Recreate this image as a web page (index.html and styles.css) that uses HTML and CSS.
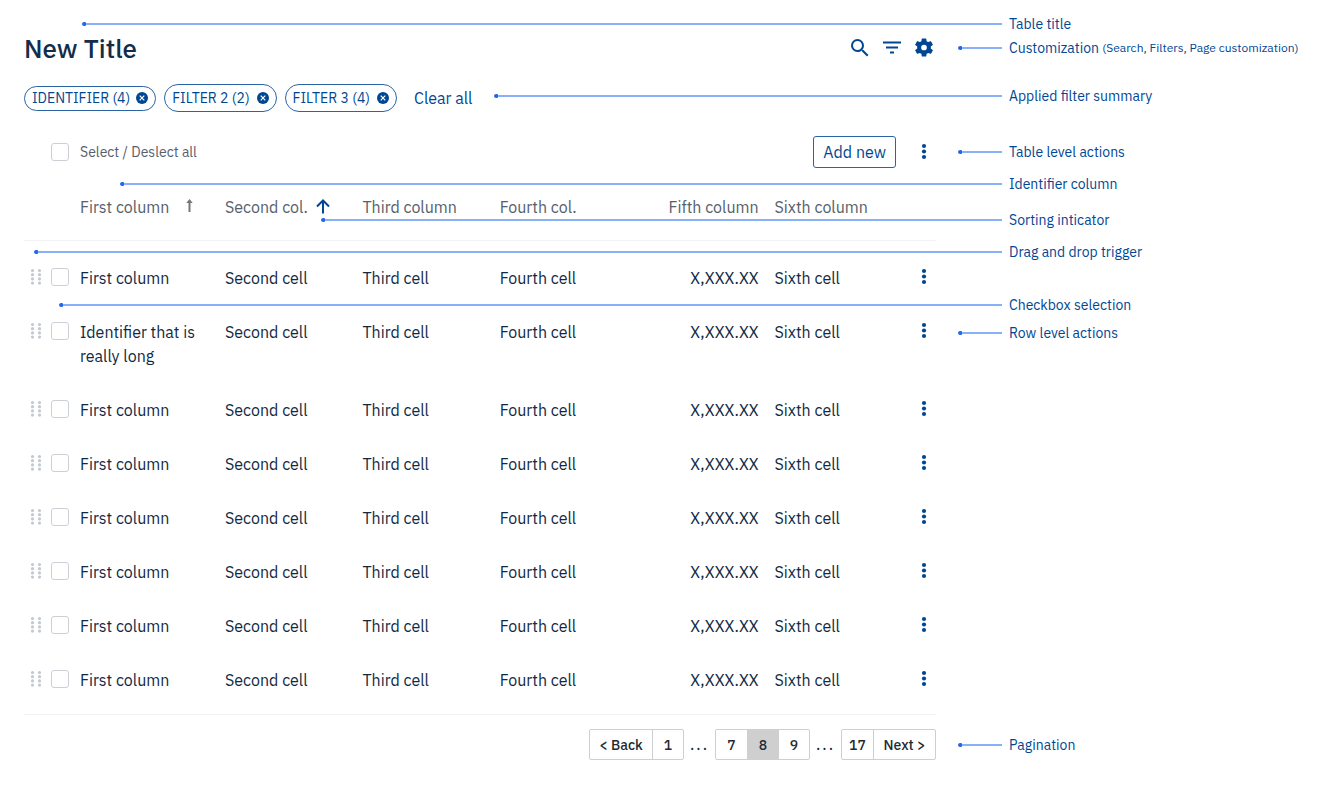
FILE: index.html
```html
<!DOCTYPE html>
<html lang="en">
<head>
<meta charset="utf-8">
<meta name="viewport" content="width=device-width, initial-scale=1">
<title>New Title</title>
<link rel="stylesheet" href="styles.css">
</head>
<body>
<svg class="sprite" aria-hidden="true">
  <symbol id="more" viewBox="0 0 24 24"><circle cx="12" cy="6" r="2.1"/><circle cx="12" cy="11.5" r="2.1"/><circle cx="12" cy="17" r="2.1"/></symbol>
  <symbol id="close" viewBox="0 0 12 12"><circle cx="6" cy="6" r="6"/><path d="M3.7 3.7l4.6 4.6M8.3 3.7L3.7 8.3" stroke="#fff" stroke-width="1.2"/></symbol>
  <symbol id="grip" viewBox="0 0 12 18"><circle cx="2.5" cy="2.5" r="1.6"/><circle cx="9.5" cy="2.5" r="1.6"/><circle cx="2.5" cy="6.7" r="1.6"/><circle cx="9.5" cy="6.7" r="1.6"/><circle cx="2.5" cy="10.9" r="1.6"/><circle cx="9.5" cy="10.9" r="1.6"/><circle cx="2.5" cy="15.1" r="1.6"/><circle cx="9.5" cy="15.1" r="1.6"/></symbol>
</svg>
<div class="page">
  <main class="panel">
    <header class="panel-header">
      <h1 class="title">New Title</h1>
      <div class="tools">
        <button class="icon-button" aria-label="Search"><svg class="icon" viewBox="0 0 24 24"><path d="M15.5 14h-.79l-.28-.27A6.47 6.47 0 0 0 16 9.5 6.5 6.5 0 1 0 9.5 16c1.61 0 3.09-.59 4.23-1.57l.27.28v.79l5 4.99L20.49 19l-4.99-5zm-6 0a4.5 4.5 0 1 1 0-9 4.5 4.5 0 0 1 0 9z"/></svg></button>
        <button class="icon-button" aria-label="Filters"><svg class="icon" viewBox="0 0 24 24"><path d="M10 17.5h4v-2h-4v2zM3 5.5v2h18v-2H3zm3 7h12v-2H6v2z"/></svg></button>
        <button class="icon-button" aria-label="Page customization"><svg class="icon" viewBox="0 0 24 24"><path transform="translate(0.6 0.1) scale(.95)" d="M19.14 12.94c.04-.3.06-.61.06-.94s-.02-.64-.07-.94l2.03-1.58a.49.49 0 0 0 .12-.61l-1.92-3.32a.49.49 0 0 0-.59-.22l-2.39.96a7.03 7.03 0 0 0-1.62-.94l-.36-2.54a.48.48 0 0 0-.48-.41h-3.84a.47.47 0 0 0-.47.41l-.36 2.54c-.59.24-1.13.57-1.62.94l-2.39-.96a.47.47 0 0 0-.59.22L2.74 8.87a.47.47 0 0 0 .12.61l2.03 1.58a6.2 6.2 0 0 0 0 1.88l-2.03 1.58a.49.49 0 0 0-.12.61l1.92 3.32c.12.22.37.29.59.22l2.39-.96c.5.38 1.03.7 1.62.94l.36 2.54c.05.24.24.41.48.41h3.84c.24 0 .44-.17.47-.41l.36-2.54c.59-.24 1.13-.56 1.62-.94l2.39.96c.22.08.47 0 .59-.22l1.92-3.32a.47.47 0 0 0-.12-.61l-2.01-1.58zM12 15a3 3 0 1 1 0-6 3 3 0 0 1 0 6z"/></svg></button>
      </div>
    </header>

    <div class="filters">
      <button class="pill pill-small">IDENTIFIER (4) <svg class="pill-icon"><use href="#close"/></svg></button>
      <button class="pill">FILTER 2 (2) <svg class="pill-icon"><use href="#close"/></svg></button>
      <button class="pill">FILTER 3 (4) <svg class="pill-icon"><use href="#close"/></svg></button>
      <button class="clear">Clear all</button>
    </div>

    <div class="toolbar">
      <label class="select-all"><input class="check" type="checkbox">Select / Deslect all</label>
      <button class="add">Add new</button>
      <button class="icon-button" aria-label="Table actions"><svg class="icon"><use href="#more"/></svg></button>
    </div>

    <table class="table">
      <colgroup><col class="col-drag"><col class="col-check"><col class="col-first"><col><col><col><col><col><col class="col-actions"></colgroup>
      <thead>
        <tr>
          <th></th><th></th>
          <th><button class="sort sort-wide">First column <svg class="arrow arrow-idle" viewBox="0 0 14 16"><path d="M7.5 13V2"/><path class="head" d="M4.3 4L7.5 0l3.2 4z"/></svg></button></th>
          <th><button class="sort">Second col. <svg class="arrow" viewBox="0 0 14 16"><path d="M7 14.5v-13M1 7.5l6-6 6 6"/></svg></button></th>
          <th>Third column</th><th>Fourth col.</th><th class="num">Fifth column</th><th>Sixth column</th><th></th>
        </tr>
      </thead>
      <tbody id="rows"></tbody>
    </table>

    <nav class="pagination" aria-label="Pagination">
      <div class="pages"><button class="page-button page-step">&lt; Back</button><button class="page-button">1</button></div>
      <span class="dots">...</span>
      <div class="pages"><button class="page-button">7</button><button class="page-button current" aria-current="page">8</button><button class="page-button">9</button></div>
      <span class="dots">...</span>
      <div class="pages"><button class="page-button">17</button><button class="page-button page-step">Next &gt;</button></div>
    </nav>
  </main>

  <aside>
    <ul class="notes">
      <li class="note from-title">Table title</li>
      <li class="note">Customization&nbsp;<small class="detail">(Search, Filters, Page customization)</small></li>
      <li class="note from-filters">Applied filter summary</li>
      <li class="note gap-toolbar">Table level actions</li>
      <li class="note from-identifier">Identifier column</li>
      <li class="note from-sort">Sorting inticator</li>
      <li class="note from-drag">Drag and drop trigger</li>
      <li class="note from-check">Checkbox selection</li>
      <li class="note gap-row">Row level actions</li>
      <li class="note gap-pages">Pagination</li>
    </ul>
  </aside>
</div>
<script src="rows.js"></script>
</body>
</html>
```
FILE: styles.css
```css
* { box-sizing: border-box; }

body {
  margin: 0;
  background: #fff;
  color: #0f2a43;
  font: 16px/24px "IBM Plex Sans", Roboto, sans-serif;
}

button {
  margin: 0;
  padding: 0;
  border: 0;
  background: none;
  color: #004793;
  font: inherit;
  cursor: pointer;
}

.sprite { display: none; }

.page {
  position: relative;
  display: grid;
  grid-template-columns: minmax(0, 1fr) 296px;
  column-gap: 73px;
  padding: 14px 15px 24px 24px;
}

.panel { padding-top: 18px; }

.panel-header {
  display: flex;
  align-items: center;
  justify-content: space-between;
  height: 32px;
}

.title {
  margin: 0;
  color: #132d4a;
  font-size: 26px;
  font-weight: 500;
  line-height: 32px;
}

.tools { display: flex; gap: 8px; }

.icon-button { display: block; width: 24px; height: 24px; }

.icon {
  display: block;
  width: 24px;
  height: 24px;
  fill: #004793;
}

.filters {
  display: flex;
  align-items: center;
  gap: 8px;
  margin-top: 20px;
}

.pill {
  display: flex;
  align-items: center;
  gap: 7px;
  height: 28px;
  padding: 0 7px;
  border: 1px solid #2a64a5;
  border-radius: 14px;
  font-size: 14px;
}

.pill-small { gap: 6px; height: 25px; }

.pill-icon { width: 12px; height: 12px; fill: #004793; }

.clear { margin-left: 9px; }

.toolbar {
  display: flex;
  align-items: center;
  gap: 16px;
  margin-top: 24px;
}

.select-all {
  display: flex;
  align-items: center;
  gap: 11px;
  margin-right: auto;
  padding-left: 27px;
  color: #56606c;
  font-size: 14px;
}

.check {
  display: block;
  width: 18px;
  height: 18px;
  margin: 0;
  border: 1px solid #cbd0d7;
  border-radius: 3px;
  background: #fff;
  appearance: none;
}

.check:checked { background: #004793; }

.add {
  height: 32px;
  padding: 0 9px;
  border: 1px solid #2a64a5;
  border-radius: 3px;
}

.table {
  width: 100%;
  margin-top: 6px;
  border-spacing: 0;
  table-layout: fixed;
}

.col-drag { width: 27px; }
.col-check { width: 29px; }
.col-first { width: 145px; }
.col-actions { width: 24px; }

th {
  height: 67px;
  padding: 0;
  border-bottom: 1px solid #f1f2f3;
  color: #56606c;
  font-weight: 400;
  text-align: left;
}

tbody::before { content: ""; display: block; height: 10px; }

td { padding: 15px 0; vertical-align: top; }

.table .num { padding-right: 16px; text-align: right; }

.name { padding-right: 16px; }

.tick { padding-top: 17px; }

.drag { padding: 17px 0 0 6px; }

.actions { padding-top: 14px; }

.grip { display: block; width: 12px; height: 18px; fill: #c3c9d1; }

.sort {
  display: flex;
  align-items: center;
  gap: 8px;
  color: inherit;
}

.sort-wide { gap: 13px; }

.arrow {
  width: 14px;
  height: 16px;
  fill: none;
  stroke: #004793;
  stroke-width: 2;
}

.arrow-idle { stroke: #777; }
.arrow-idle .head { fill: #777; stroke: none; }

.pagination {
  display: flex;
  justify-content: flex-end;
  margin-top: 7px;
  padding-top: 14px;
  border-top: 1px solid #f1f2f3;
}

.pages {
  display: flex;
  overflow: hidden;
  border: 1px solid #cfcfcf;
  border-radius: 2px;
}

.page-button {
  min-width: 31px;
  height: 29px;
  color: #222b33;
  font-size: 14px;
  font-weight: 500;
}

.page-button + .page-button { border-left: 1px solid #cfcfcf; }

.page-step { width: 62px; }

.current { background: #cfcfcf; }

.dots {
  width: 31px;
  font-weight: 400;
  letter-spacing: 2px;
  line-height: 31px;
  text-align: center;
}

.notes {
  margin: 0;
  padding: 0;
  color: #004793;
  font-size: 14px;
  line-height: 20px;
  list-style: none;
}

.note {
  --start: calc(100% - 362px);
  display: flex;
  align-items: center;
  margin-top: 4px;
  white-space: nowrap;
}

.detail { font-size: 12px; }

/* leader line with its dot, drawn over the table */
.note::before {
  content: "";
  position: absolute;
  z-index: 1;
  right: 318px;
  left: var(--start);
  height: 4px;
  background:
    radial-gradient(circle, #2469eb 70%, #8ab1f7 80%) 0 0 / 4px 4px no-repeat,
    linear-gradient(#8ab1f7, #8ab1f7) 2px 1px / 100% 2px no-repeat;
  border-radius: 2px 0 0 2px;
  pointer-events: none;
}

.from-title { --start: 82px; margin-top: 0; }
.from-filters { --start: 494px; margin-top: 28px; }
.gap-toolbar { margin-top: 36px; }
.from-identifier { --start: 120px; margin-top: 12px; }
.from-sort { --start: 321px; margin-top: 16px; }
.from-drag { --start: 34px; margin-top: 12px; }
.from-check { --start: 59px; margin-top: 33px; }
.gap-row { margin-top: 8px; }
.gap-pages { margin-top: 392px; }
```
FILE: rows.js
```js
const names = [
  "First column", "Identifier that is really long", "First column", "First column",
  "First column", "First column", "First column", "First column"
];

document.getElementById("rows").innerHTML = names.map((name, i) => `
  <tr>
    <td class="drag"><svg class="grip"><use href="#grip"/></svg></td>
    <td class="tick"><input class="check" type="checkbox" aria-label="Select row ${i + 1}"></td>
    <td class="name">${name}</td>
    <td>Second cell</td>
    <td>Third cell</td>
    <td>Fourth cell</td>
    <td class="num">X,XXX.XX</td>
    <td>Sixth cell</td>
    <td class="actions"><button class="icon-button" aria-label="Row ${i + 1} actions"><svg class="icon"><use href="#more"/></svg></button></td>
  </tr>`).join("");
```
